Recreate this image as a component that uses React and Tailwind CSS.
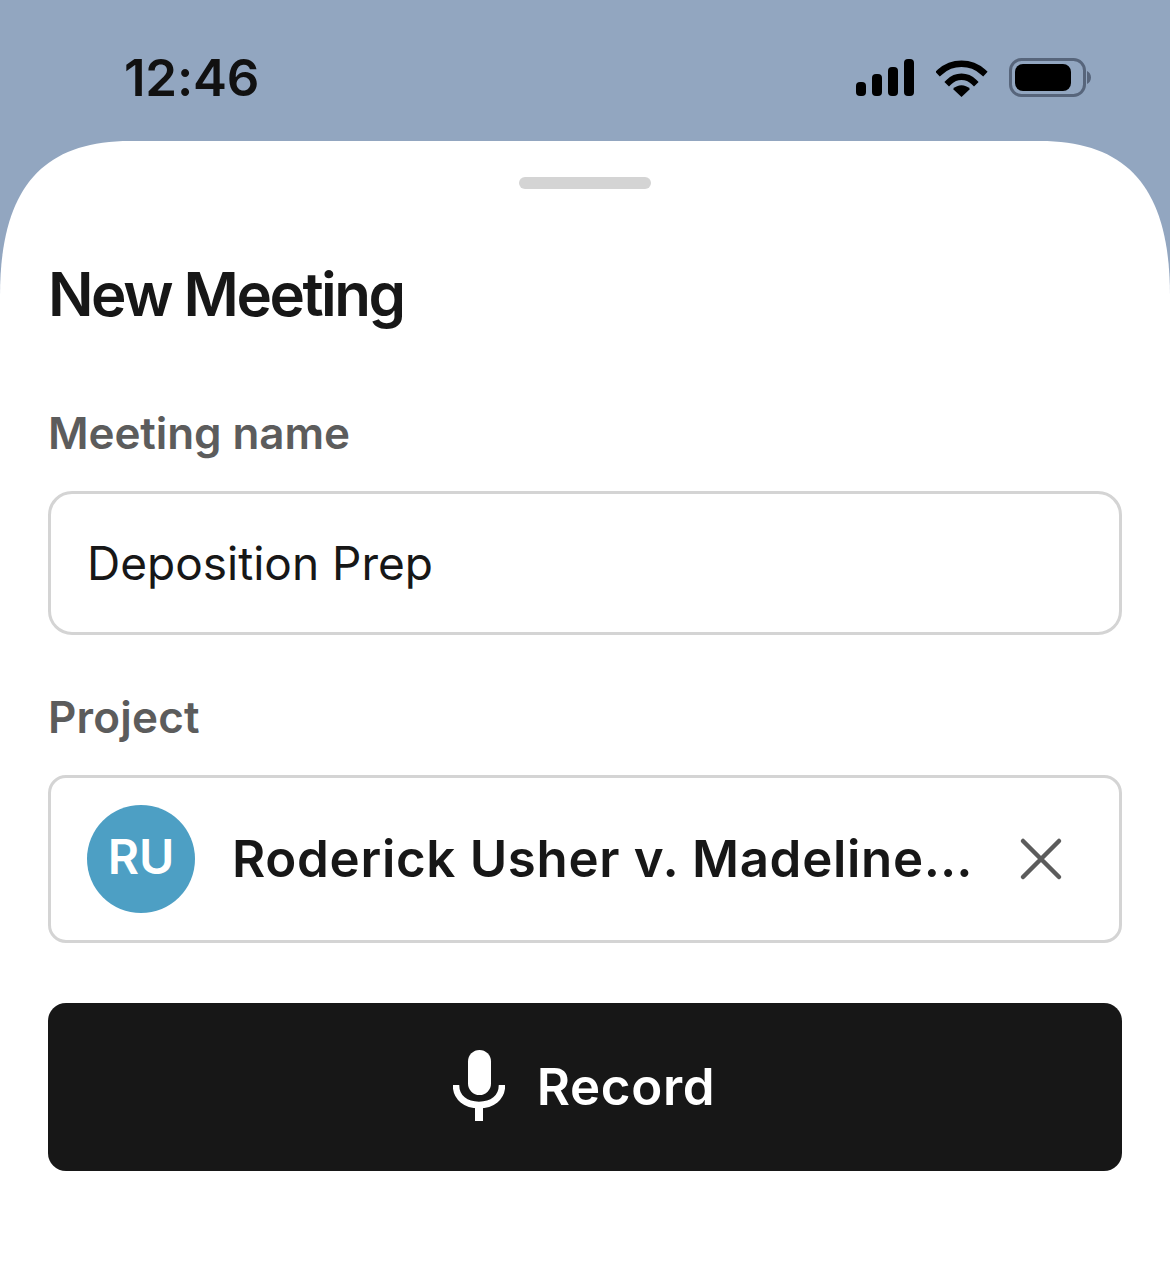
export default function App() {
  return (
    <div className="w-[1170px] h-[1264px] bg-[#92a6c0] flex flex-col overflow-hidden font-['Inter',sans-serif]">
      <div className="h-[141px] shrink-0 flex items-start justify-between pl-[124px] pr-[78px]">
        <div className="mt-[48px] text-[51px] leading-[60px] font-semibold text-[#111111] tracking-[-0.2px]">12:46</div>
        <div className="mt-[58px] flex items-start">
          <svg width="58" height="38" viewBox="0 0 58 38" className="block">
            <rect x="0" y="24" width="10" height="14" rx="4" fill="#000" />
            <rect x="16" y="16" width="10" height="22" rx="4" fill="#000" />
            <rect x="32" y="9" width="10" height="29" rx="4" fill="#000" />
            <rect x="48" y="1" width="10" height="37" rx="4" fill="#000" />
          </svg>
          <svg width="52" height="40" viewBox="0 0 52 40" className="block ml-[22px]">
            <path d="M4 14 C16 3 35 3 47 14" fill="none" stroke="#000" strokeWidth="6.500" strokeLinecap="square" />
            <path d="M13 24 C20 17 31 17 38 24" fill="none" stroke="#000" strokeWidth="6.500" strokeLinecap="square" />
            <path d="M17 31 C22 26 29 26 34 31 L25.500 39 Z" fill="#000" />
          </svg>
          <svg width="83" height="40" viewBox="0 0 83 40" className="block ml-[21px]">
            <rect x="1.500" y="1.500" width="74" height="36" rx="11" fill="none" stroke="#57657b" strokeWidth="3" />
            <rect x="6" y="6" width="56" height="27" rx="8" fill="#000" />
            <path d="M78 13 C80 14 82 16 82 19.500 C82 23 80 25 78 26 Z" fill="#57657b" />
          </svg>
        </div>
      </div>
      <div className="flex-1 bg-white [clip-path:path('M0_155C0_50_40_0_130_0H1040C1130_0_1170_50_1170_155V1123H0Z')] px-[48px] flex flex-col">
        <div className="mt-[36px] self-center w-[132px] h-[12px] rounded-full bg-[#d4d4d4]" />
        <h1 className="mt-[70px] text-[60px] leading-[70px] font-semibold tracking-[-2.500px] text-[#171717]">New Meeting</h1>
        <label className="mt-[77px] text-[44px] leading-[54px] font-semibold text-[#5c5c5c] tracking-[-0.1px]">Meeting name</label>
        <div className="mt-[31px] h-[144px] border-[3px] border-[#d4d4d4] rounded-[24px] flex items-center pl-[36px] text-[46px] text-[#171717]">
          Deposition Prep
        </div>
        <label className="mt-[55px] text-[44px] leading-[54px] font-semibold text-[#5c5c5c] tracking-[0.2px]">Project</label>
        <div className="mt-[31px] h-[168px] border-[3px] border-[#d4d4d4] rounded-[18px] flex items-center pl-[36px]">
          <div className="w-[108px] h-[108px] rounded-full bg-[#4d9fc4] flex items-center justify-center text-white text-[48px] font-semibold shrink-0 pb-[4px]">RU</div>
          <div className="ml-[37px] w-[743px] text-[51px] font-semibold tracking-[0.7px] text-[#171717] whitespace-nowrap overflow-hidden text-ellipsis">Roderick Usher v. Madeline Usher</div>
          <svg width="44" height="44" viewBox="0 0 44 44" className="block ml-[44px] shrink-0">
            <path d="M4 4 L40 40 M40 4 L4 40" stroke="#5c5c5c" strokeWidth="4.500" strokeLinecap="round" />
          </svg>
        </div>
        <div className="mt-[60px] h-[168px] bg-[#171717] rounded-[18px] flex items-center justify-center">
          <svg width="52" height="71" viewBox="0 0 52 71" className="block mb-[3px]">
            <rect x="15" y="0" width="23" height="45" rx="11.500" fill="#fff" />
            <path d="M3 35 C3 48 13 55 26 55 C39 55 49 48 49 35" fill="none" stroke="#fff" strokeWidth="6.500" />
            <rect x="22" y="54" width="8" height="17" fill="#fff" />
          </svg>
          <span className="ml-[32px] mr-[2px] text-[51px] font-semibold tracking-[0.7px] text-white">Record</span>
        </div>
      </div>
    </div>
  );
}
